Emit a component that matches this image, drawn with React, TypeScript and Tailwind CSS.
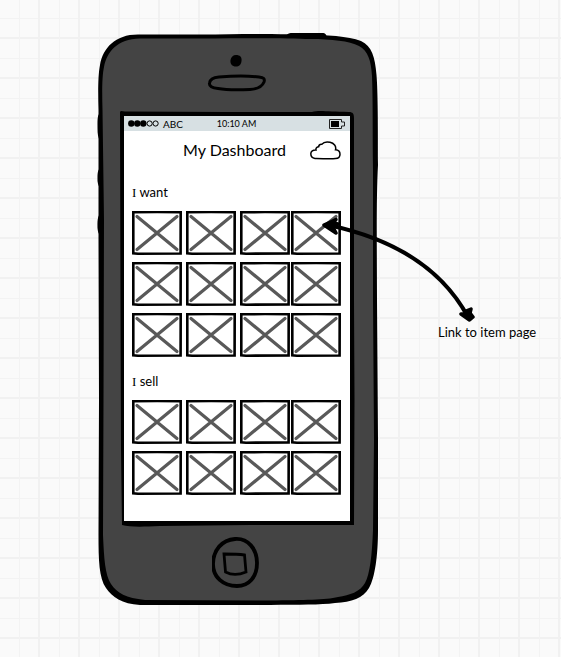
import React from "react";

type IconProps = { className?: string };

function PhoneBody({ className }: IconProps) {
  return (
    <svg viewBox="98 32 280 574" className={className} aria-hidden="true">
      <path d="M286 36C288 32 292 33 300 33L322 33C326 33 326 35 327 37Z" />
      <path d="M100 113C97 115 97.500 122 97.500 128C97.500 134 98 138 100 140ZM100 168C97 171 97.500 176 97.500 181C98 185 99 187 101 188ZM101 213C97 216 97.500 222 97.500 228C98 233 99 235 102 236Z" />
      <path d="M98.500 110C98 92 98 75 100 65C103 48 115 34.500 138 34.500L200 34.500C240 34 270 33.500 300 34.500C328 35 348 36 361 41C372 46 375 57 376.500 75C378 92 378 130 378 165C376 200 377 260 377 300L378 440L378 530C378 555 375 578 369 588C363 598 352 602 335 603C320 605 300 604.500 270 605L140 605C122 604 112 597 106 588C99 578 98.500 560 98.500 535L99 400L98.500 240Z" />
      <path
        fill="#444444"
        d="M102.500 110C102 92 102 76 104 67C107 52 117 39 140 38.500L200 38.500C250 38 290 38 310 39C332 39 349 41 359 46C368 51 371 60 372 76C373 100 372.500 130 373 170L373 300L374 440L373 530C372 555 370 574 365 583C360 592 350 595 338 597C325 600 305 600 270 600.500L145 600C126 598 117 593 111 584C105 575 104 558 103 535L103.500 400L104 220Z"
      />
      <path d="M120 112C121 110 123 112 126 111.500L225 112L312 112C320 110 328 112 349 112C353 112 354 114 354 118L354 300L354.500 400L354 525L250 525L160 526C140 527 130 527 122 525L121 450L120.500 300Z" />
    </svg>
  );
}

function Earpiece() {
  return (
    <svg viewBox="207 54 60 38" className="h-[38px] w-[60px]" aria-hidden="true">
      <path d="M236 55C240 55 242 57 241.500 61C241 65 239 66.500 236 66.500C232 66.500 230 64 230.500 60C231 57 233 55 236 55Z" />
      <path
        d="M209.500 83C210 79 213 77.500 219 77C232 76 250 76 259 77C264 77.500 265 79 264 82C262 87 258 89 250 89.500C240 90 226 90 218 88.500C212 88 209 86 209.500 83Z"
        fill="none"
        stroke="black"
        strokeWidth="3"
      />
    </svg>
  );
}

function HomeIcon() {
  return (
    <svg viewBox="212 537 50 52" className="h-[52px] w-[50px]" aria-hidden="true">
      <path
        d="M236 539C249 538 258 549 258 563C258 577 250 586 238 586C224 586 214 577 214 564C214 550 223 540 236 539Z"
        fill="none"
        stroke="black"
        strokeWidth="3.800"
        transform="translate(-1 0)"
      />
      <path
        d="M224 554C231 554 238 554 244.500 555L246 572C239 575 231 575 225.500 572Z"
        fill="none"
        stroke="black"
        strokeWidth="2.800"
      />
    </svg>
  );
}

function SignalDots() {
  return (
    <svg viewBox="0 0 31 7" className="h-[7px] w-[31px]" aria-label="Signal">
      <circle cx="3.300" cy="3.500" r="3.200" />
      <circle cx="9.300" cy="3.500" r="3.200" />
      <circle cx="15.300" cy="3.500" r="3.200" />
      <circle cx="21.600" cy="3.500" r="2.600" fill="none" stroke="black" />
      <circle cx="27.600" cy="3.500" r="2.600" fill="none" stroke="black" />
    </svg>
  );
}

function Battery() {
  return (
    <svg viewBox="0 0 16 10" className="h-[10px] w-[16px]" aria-label="Battery">
      <path
        d="M.5 .5H12.500V3H15.500V7H12.500V9.500H.5Z"
        fill="none"
        stroke="#222222"
      />
      <path d="M2 2H10V8H2Z" />
    </svg>
  );
}

function Cloud() {
  return (
    <svg viewBox="0 0 31 19" className="h-[19px] w-[31px]" aria-hidden="true">
      <path
        d="M5 17.500C2 17 .8 15 .8 12.800C.8 10.500 3 8.800 6 9C5.500 7 7 5.800 8.600 5.800C8.800 4 10 3 12 3.200C13.500 1 17 .6 20 1.200C24 2 26.500 5.500 25.500 8.800C28.500 9 30 11 30 13.200C30 16 28 17.500 25.500 17.600C19 18.300 11 17.300 5 17.500Z"
        fill="white"
        stroke="black"
        strokeWidth="1.500"
      />
    </svg>
  );
}

function ItemTile({ label }: { label: string }) {
  return (
    <a href="#item" aria-label={label} className="block h-[44px] w-[50px]">
      <svg viewBox="0 0 50 44" className="h-full w-full" aria-hidden="true">
        <path
          d="M1.300 1.200L25 1L48.700 1.200L48.600 42.500L6 42.700L1.300 42.300Z"
          fill="white"
          stroke="black"
          strokeWidth="2.600"
        />
        <path
          d="M5 5.500L45 38.500M45 5.500L5 38.500"
          stroke="#595959"
          strokeWidth="3.200"
          strokeLinecap="round"
        />
      </svg>
    </a>
  );
}

function ItemSection({ verb, count }: { verb: string; count: number }) {
  return (
    <section>
      <h2 className="mb-2 text-[13px] leading-5">
        <span className="font-['Liberation_Serif',serif]">I</span> {verb}
      </h2>
      <div className="grid grid-cols-[54fr_54fr_51fr_50fr] gap-y-[7px]">
        {Array.from({ length: count }, (_, i) => (
          <ItemTile key={i} label={`Item ${i + 1}`} />
        ))}
      </div>
    </section>
  );
}

function Screen() {
  return (
    <main className="flex h-[405px] flex-col bg-white">
      <div className="grid h-[15px] grid-cols-[1fr_auto_1fr] items-center bg-[#d7e0e3] pl-1 pr-[5px] text-[10px] leading-[14px]">
        <div className="flex items-center gap-1">
          <SignalDots />
          <span>ABC</span>
        </div>
        <span className="text-[9px]">10:10 AM</span>
        <div className="justify-self-end">
          <Battery />
        </div>
      </div>
      <header className="grid h-[38px] grid-cols-[1fr_auto_1fr] items-center pl-1 pr-[9px]">
        <h1 className="col-start-2 text-[16px] leading-6">My Dashboard</h1>
        <button type="button" aria-label="Cloud" className="justify-self-end">
          <Cloud />
        </button>
      </header>
      <div className="flex flex-col gap-[14px] pl-2 pr-[9px] pt-[13px]">
        <ItemSection verb="want" count={12} />
        <ItemSection verb="sell" count={8} />
      </div>
    </main>
  );
}

function Phone() {
  return (
    <div className="relative h-[574px] w-[280px] shrink-0">
      <PhoneBody className="absolute inset-0 h-full w-full overflow-visible" />
      <div className="relative flex flex-col pl-[26px] pr-7">
        <div className="flex h-[84px] justify-center pt-[22px]">
          <Earpiece />
        </div>
        <Screen />
        <button type="button" aria-label="Home" className="mt-4 self-center">
          <HomeIcon />
        </button>
      </div>
    </div>
  );
}

function Annotation() {
  return (
    <aside className="relative ml-[60px] mt-[290px] whitespace-nowrap text-[13px] leading-5">
      <svg
        viewBox="320 215 156 108"
        className="absolute -left-[118px] -top-[107px] h-[108px] w-[156px]"
        aria-hidden="true"
      >
        <path
          d="M328 225C390 238 440 265 468 317"
          fill="none"
          stroke="black"
          strokeWidth="4"
        />
        <path
          d="M324 225L336 219.500L333 223L338 224L333 227L336 233Z M469.500 320L461 314L465 314L466 311L471 309L470 313L473 317Z"
          stroke="black"
          strokeWidth="3.500"
          strokeLinejoin="round"
        />
      </svg>
      <p>Link to item page</p>
    </aside>
  );
}

export default function App() {
  return (
    <div className="flex min-h-screen items-start bg-[#fafafa] bg-[linear-gradient(90deg,transparent_19px,#f3f3f3_19px,#f3f3f3_20px,transparent_20px,transparent_38px,#f1f1f1_38px),linear-gradient(180deg,transparent_18px,#f3f3f3_18px,#f3f3f3_19px,transparent_19px,transparent_37px,#f1f1f1_37px,#f1f1f1_39px,transparent_39px)] bg-[size:40px_40px] pl-[98px] pt-8 font-['Lato','Liberation_Sans',sans-serif] text-black">
      <Phone />
      <Annotation />
    </div>
  );
}
